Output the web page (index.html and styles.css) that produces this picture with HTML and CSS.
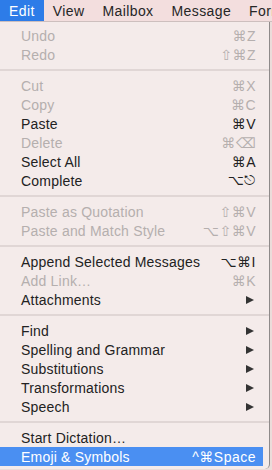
FILE: index.html
```html
<!DOCTYPE html>
<html lang="en">
<head>
    <meta charset="UTF-8">
    <title>Edit Menu</title>
    <link rel="stylesheet" href="styles.css">
</head>
<body>
    <div class="menubar">
        <span class="title active">Edit</span>
        <span class="title">View</span>
        <span class="title">Mailbox</span>
        <span class="title">Message</span>
        <span class="title">Format</span>
    </div>

    <div class="menu">
        <div class="item off"><span>Undo</span><span class="key">⌘Z</span></div>
        <div class="item off"><span>Redo</span><span class="key">⇧⌘Z</span></div>
        <div class="sep"></div>
        <div class="item off"><span>Cut</span><span class="key">⌘X</span></div>
        <div class="item off"><span>Copy</span><span class="key">⌘C</span></div>
        <div class="item"><span>Paste</span><span class="key">⌘V</span></div>
        <div class="item off"><span>Delete</span><span class="key">⌘⌫</span></div>
        <div class="item"><span>Select All</span><span class="key">⌘A</span></div>
        <div class="item"><span>Complete</span><span class="key">⌥⎋</span></div>
        <div class="sep"></div>
        <div class="item off"><span>Paste as Quotation</span><span class="key">⇧⌘V</span></div>
        <div class="item off"><span>Paste and Match Style</span><span class="key">⌥⇧⌘V</span></div>
        <div class="sep"></div>
        <div class="item"><span>Append Selected Messages</span><span class="key">⌥⌘I</span></div>
        <div class="item off"><span>Add Link…</span><span class="key">⌘K</span></div>
        <div class="item"><span>Attachments</span><span class="arrow"></span></div>
        <div class="sep"></div>
        <div class="item"><span>Find</span><span class="arrow"></span></div>
        <div class="item"><span>Spelling and Grammar</span><span class="arrow"></span></div>
        <div class="item"><span>Substitutions</span><span class="arrow"></span></div>
        <div class="item"><span>Transformations</span><span class="arrow"></span></div>
        <div class="item"><span>Speech</span><span class="arrow"></span></div>
        <div class="sep"></div>
        <div class="item"><span>Start Dictation…</span></div>
        <div class="item selected"><span>Emoji &amp; Symbols</span><span class="key">^⌘Space</span></div>
    </div>
</body>
</html>
```

FILE: styles.css
```css
body {
    margin: 0;
    width: 272px;
    height: 470px;
    overflow: hidden;
    background-color: #ebdcda;
    font-family: "Liberation Sans", Arial, sans-serif;
    font-size: 14px;
    letter-spacing: 0.2px;
    color: #222;
}
.menubar {
    display: flex;
    height: 22px;
    background-color: #f3dede;
    border-bottom: 1px solid #cdbfbe;
    box-sizing: border-box;
    white-space: nowrap;
    overflow: hidden;
}
.title {
    padding: 0 9px;
    line-height: 22px;
    font-size: 14px;
    letter-spacing: 0.4px;
    color: #262626;
}
.title.active {
    background-color: #2d7ce8;
    color: white;
}
.menu {
    width: 270px;
    padding: 4px 0 3px;
    background-color: #f4ebea;
    border-right: 1px solid #8e8a8a;
    border-radius: 0 0 5px 0;
    box-sizing: border-box;
}
.item {
    display: flex;
    justify-content: space-between;
    align-items: center;
    height: 19px;
    padding: 0 7px 0 21px;
    margin-right: 6px;
    white-space: nowrap;
}
.item.off {
    color: #b5afae;
}
.item.selected {
    background-color: #4a8ff2;
    color: white;
}
.key {
    font-family: "Liberation Sans", "DejaVu Sans", sans-serif;
    font-size: 14px;
    letter-spacing: 0.5px;
}
.arrow {
    width: 0;
    height: 0;
    margin-right: 2px;
    border-left: 8px solid #333;
    border-top: 4.5px solid transparent;
    border-bottom: 4.5px solid transparent;
}
.sep {
    height: 2px;
    margin: 5px 0;
    background-color: #e0d6d5;
}
```
